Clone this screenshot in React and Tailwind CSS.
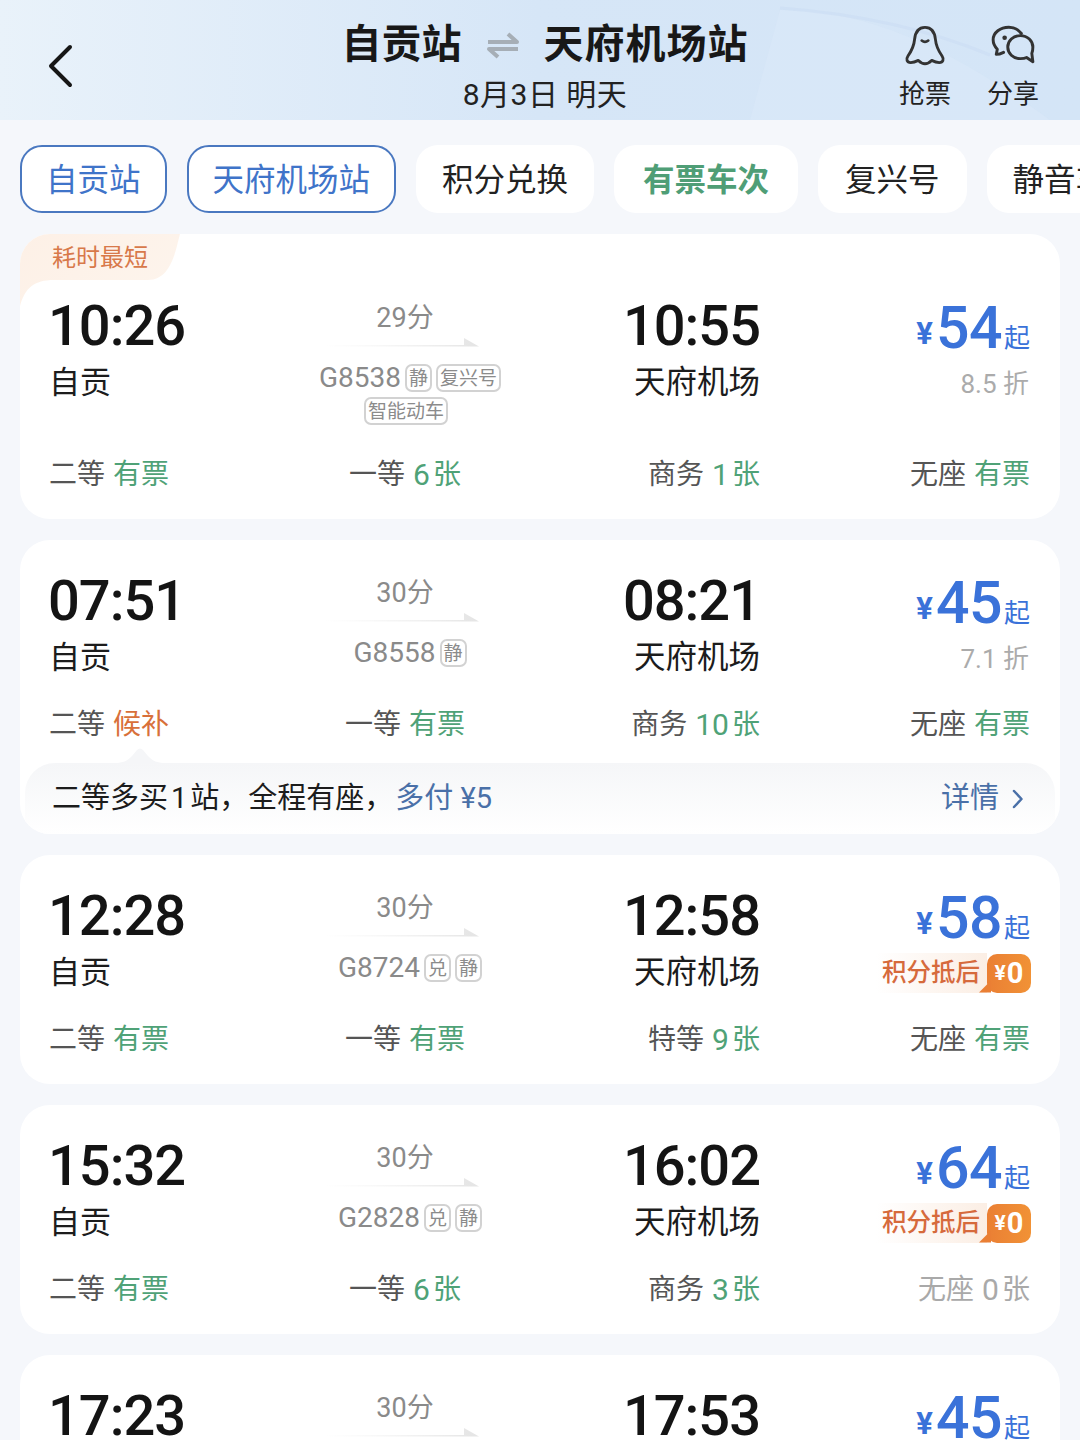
import React from 'react';

const filters = [
    { label: '自贡站', className: 'border-2 border-[#4a78c0] px-[24px] text-[#3f74c9]' },
    { label: '天府机场站', className: 'border-2 border-[#4a78c0] px-[24px] text-[#3f74c9]' },
    { label: '积分兑换', className: 'px-[26px] text-[#222]' },
    { label: '有票车次', className: 'px-[29px] font-bold text-[#4f9e76]' },
    { label: '复兴号', className: 'px-[27px] text-[#222]' },
    { label: '静音车', className: 'px-[26px] text-[#222]' },
];

const trains = [
    {
        depart: '10:26', arrive: '10:55', duration: '29分', code: 'G8538', tags: ['静', '复兴号'], extraTag: '智能动车',
        price: '54', discount: '8.5 折', badge: '耗时最短',
        seats: [['二等', '有票', 'green'], ['一等', '6张', 'green'], ['商务', '1张', 'green'], ['无座', '有票', 'green']],
    },
    {
        depart: '07:51', arrive: '08:21', duration: '30分', code: 'G8558', tags: ['静'],
        price: '45', discount: '7.1 折', tip: true,
        seats: [['二等', '候补', 'orange'], ['一等', '有票', 'green'], ['商务', '10张', 'green'], ['无座', '有票', 'green']],
    },
    {
        depart: '12:28', arrive: '12:58', duration: '30分', code: 'G8724', tags: ['兑', '静'],
        price: '58', points: true,
        seats: [['二等', '有票', 'green'], ['一等', '有票', 'green'], ['特等', '9张', 'green'], ['无座', '有票', 'green']],
    },
    {
        depart: '15:32', arrive: '16:02', duration: '30分', code: 'G2828', tags: ['兑', '静'],
        price: '64', points: true,
        seats: [['二等', '有票', 'green'], ['一等', '6张', 'green'], ['商务', '3张', 'green'], ['无座', '0张', 'gray']],
    },
    {
        depart: '17:23', arrive: '17:53', duration: '30分', code: 'G8730', tags: ['静'],
        price: '45', discount: '7.1 折',
        seats: [['二等', '有票', 'green'], ['一等', '有票', 'green'], ['商务', '有票', 'green'], ['无座', '有票', 'green']],
    },
];

const seatAlign = ['justify-start -ml-px', 'justify-center', 'justify-end', 'justify-end'];

const Arrow = () => (
    <svg width="156" height="12" viewBox="0 0 156 12" className="block mx-auto -translate-x-[3px]">
        <defs>
            <linearGradient id="arrowFade" x1="0" x2="1" y1="0" y2="0">
                <stop offset="0" stopColor="#ececec" stopOpacity="0" />
                <stop offset="1" stopColor="#e4e4e4" />
            </linearGradient>
        </defs>
        <path d="M0 8 H130 V9.5 H0 Z M130 8 H140 V1 L155 9.5 H130 Z" fill="url(#arrowFade)" />
    </svg>
);

const Tag = ({ text }) => (
    <span className="flex h-[28px] items-center rounded-[7px] border-2 border-[#d2d2d2] px-[2px] text-[19px] leading-none text-[#8b8b8b]">
        {text}
    </span>
);

const Seat = ({ seat, align }) => {
    const [name, value, tone] = seat;
    const nameColor = tone === 'gray' ? 'text-[#a9a9a9]' : 'text-[#555]';
    const valueColor = tone === 'orange' ? 'text-[#d8703a]' : tone === 'gray' ? 'text-[#a9a9a9]' : 'text-[#4fa277]';
    const count = value.endsWith('张') ? value.slice(0, -1) : null;
    return (
        <div className={`flex h-[36px] items-center gap-[8px] pt-[4px] text-[28px] leading-[32px] ${align}`}>
            <span className={nameColor}>{name}</span>
            {count ? (
                <span className={`flex items-center gap-[3px] ${valueColor}`}>
                    <span className="text-[30px]">{count}</span>
                    <span>张</span>
                </span>
            ) : (
                <span className={valueColor}>{value}</span>
            )}
        </div>
    );
};

const PointsTag = () => (
    <div className="-mb-px flex h-[40px] items-center justify-end">
        <span className="flex h-[40px] items-center bg-gradient-to-r from-white to-[#fbeee4] pl-[6px] pr-[7px] text-[24.5px] font-medium text-[#d66a3c]">
            积分抵后
        </span>
        <span className="relative -mr-px flex h-[39px] w-[44px] items-center justify-center gap-[1px] rounded-[10px] bg-gradient-to-r from-[#ea7f34] to-[#f19236] font-bold text-white">
            <span className="absolute -left-[8px] bottom-0 h-[12px] w-[12px] bg-[#ea7f34] [clip-path:polygon(0_100%,100%_0,100%_100%)]" />
            <span className="text-[21px] leading-none">¥</span>
            <span className="text-[29px] leading-none">0</span>
        </span>
    </div>
);

const TrainCard = ({ train }) => (
    <div className={`relative overflow-hidden rounded-[30px] bg-white ${train.tip ? '' : 'pb-[28px]'} ${train.badge ? 'pt-[59px]' : 'pt-[28px]'}`}>
        {train.badge && (
            <>
                <svg width="160" height="72" viewBox="0 0 160 72" className="absolute left-0 top-0">
                    <defs>
                        <linearGradient id="badgeFade" x1="0" x2="1" y1="0" y2="0.6">
                            <stop offset="0" stopColor="#fdf0e6" />
                            <stop offset="1" stopColor="#fdf4ec" />
                        </linearGradient>
                    </defs>
                    <path d="M0 0 H160 C156 14 152 46 128 46 H34 C14 46 5 54 0 72 Z" fill="url(#badgeFade)" />
                </svg>
                <span className="absolute left-[32px] top-[7px] text-[24px] leading-[34px] text-[#d8794a]">{train.badge}</span>
            </>
        )}
        <div className="grid grid-cols-[210px_290px_210px_270px] gap-y-[28px] px-[30px]">
            <div className="pt-[1px]">
                <div className="-ml-[2px] text-[56px] font-medium leading-[64px] tracking-[-1px] text-[#141414]">{train.depart}</div>
                <div className="-ml-px mt-[6px] text-[31px] leading-[38px] text-[#1c1c1c]">自贡</div>
            </div>
            <div className="pt-[10px] text-center">
                <div className="text-[27px] leading-[30px] text-[#8a8a8a]">{train.duration}</div>
                <div className="mt-[4px]"><Arrow /></div>
                <div className="mt-[14px] flex h-[30px] items-center justify-center gap-[4px] pl-[10px]">
                    <span className="text-[28px] leading-[30px] text-[#8a8a8a]">{train.code}</span>
                    {train.tags.map((tag) => <Tag key={tag} text={tag} />)}
                </div>
                {train.extraTag && (
                    <div className="mb-[1px] mt-[3px] flex h-[30px] items-center justify-center pl-[2px]">
                        <Tag text={train.extraTag} />
                    </div>
                )}
            </div>
            <div className="pt-[1px] text-right">
                <div className="text-[56px] font-medium leading-[64px] tracking-[-1px] text-[#141414]">{train.arrive}</div>
                <div className="mt-[6px] text-[31.5px] leading-[38px] text-[#1c1c1c]">天府机场</div>
            </div>
            <div>
                <div className="flex h-[70px] items-end justify-end pb-[2px] text-[#3a72d9]">
                    <span className="mb-[7px] mr-[3px] text-[31px] font-bold leading-[40px]">¥</span>
                    <span className="text-[59px] font-medium leading-[66px] tracking-[-0.5px]">{train.price}</span>
                    <span className="mb-[6px] ml-[2px] text-[26px] leading-[34px]">起</span>
                </div>
                {train.discount && (
                    <div className="mt-[3px] pr-px text-right text-[26px] leading-[36px] text-[#ababab]">{train.discount}</div>
                )}
                {train.points && <PointsTag />}
            </div>
            {train.seats.map((seat, i) => <Seat key={seat[0]} seat={seat} align={seatAlign[i]} />)}
        </div>
        {train.tip && (
            <div className="relative mx-[5px] mt-[22px] flex h-[71px] items-center justify-between rounded-t-[30px] bg-gradient-to-b from-[#f5f6f8] to-white pl-[27px] pr-[32px] text-[29px]">
                <svg width="50" height="16" viewBox="0 0 50 16" className="absolute left-[90px] top-[-16px]">
                    <path d="M0 16 C8 16 12 14 17 9 L22 3 C24 1 26 1 28 3 L33 9 C38 14 42 16 50 16 Z" fill="#f5f6f8" />
                </svg>
                <div className="text-[#1c1c1c]">
                    二等多买<span className="mx-[3px]">1</span>站，全程有座，<span className="ml-[2px] text-[#4a70a8]">多付 ¥5</span>
                </div>
                <div className="flex items-center gap-[13px] text-[#4a70a8]">
                    详情
                    <svg width="11" height="20" viewBox="0 0 11 20" fill="none">
                        <path d="M2 2 L9.5 10 L2 18" stroke="#4a70a8" strokeWidth="2.5" strokeLinecap="round" strokeLinejoin="round" />
                    </svg>
                </div>
            </div>
        )}
    </div>
);

const App = () => {
    return (
        <div className="h-[1440px] w-[1080px] overflow-hidden bg-[#f5f7fb] [font-family:Roboto,'Noto_Sans_CJK_SC',sans-serif]">
            <header className="relative flex h-[120px] overflow-hidden bg-gradient-to-r from-[#e9f2fa] via-[#d6e6f7] to-[#d4e5f7]">
                <svg width="400" height="120" viewBox="0 0 400 120" fill="none" className="absolute right-0 top-0">
                    <path d="M70 120 L100 10 C180 10 260 40 370 120 Z" fill="#dbe9f9" opacity="0.5" />
                    <path d="M100 8 C180 14 250 30 310 55" stroke="#c9dcf4" strokeWidth="3" opacity="0.5" />
                </svg>
                <div className="relative flex w-[195px] items-center pl-[48px] pt-[11px]">
                    <svg width="26" height="44" viewBox="0 0 26 44" fill="none">
                        <path d="M22 3 L3 22 L22 41" stroke="#161616" strokeWidth="4" strokeLinecap="round" strokeLinejoin="round" />
                    </svg>
                </div>
                <div className="relative flex flex-1 flex-col items-center pt-[21px]">
                    <div className="flex h-[48px] items-center text-[40px] font-bold leading-[48px] text-[#181818]">
                        <span>自贡站</span>
                        <svg width="32" height="28" viewBox="0 0 32 28" fill="none" className="mx-[25px]">
                            <path d="M1 11 H30 L21 3" stroke="#a6aeb6" strokeWidth="4" strokeLinejoin="round" />
                            <path d="M31 18 H2 L11 26" stroke="#a6aeb6" strokeWidth="4" strokeLinejoin="round" />
                        </svg>
                        <span className="tracking-[1px]">天府机场站</span>
                    </div>
                    <div className="mt-[6px] text-[30px] leading-[40px] tracking-[0.5px] text-[#222]">8月3日 明天</div>
                </div>
                <div className="relative flex gap-[28px] pr-[37px] pt-[24px]">
                    <div className="flex w-[60px] flex-col items-center">
                        <svg width="44" height="42" viewBox="0 0 40 38" fill="none">
                            <path d="M20 3 C12.5 3 11 9 10.5 14 C10 20 8 24 4.5 29 C2.5 32 3.5 35 7 35 C10 35 12 34 14 33 C16 35 18 36 20 36 C22 36 24 35 26 33 C28 34 30 35 33 35 C36.5 35 37.5 32 35.5 29 C32 24 30 20 29.5 14 C29 9 27.5 3 20 3 Z" stroke="#333" strokeWidth="2.6" strokeLinejoin="round" />
                            <path d="M17 15 Q20 17.5 23 15" stroke="#333" strokeWidth="2.4" strokeLinecap="round" />
                        </svg>
                        <span className="mt-[10px] text-[26px] leading-[36px] text-[#222]">抢票</span>
                    </div>
                    <div className="flex w-[60px] flex-col items-center">
                        <svg width="46" height="42" viewBox="0 0 44 40" fill="none">
                            <path d="M30 9 C27 5 23 3 18 3 C10 3 3 8 3 15 C3 19 5 22 7 24 L6 29 C8 29 11 28 13 27" stroke="#333" strokeWidth="2.8" strokeLinecap="round" strokeLinejoin="round" />
                            <path d="M29 11 C22 11 17 16 17 22 C17 28 22 33 29 33 C31 33 33 33 35 32 L41 36 L40 28 C41 26 41 24 41 22 C41 16 36 11 29 11 Z" stroke="#333" strokeWidth="2.8" strokeLinejoin="round" />
                            <circle cx="14" cy="13" r="2.2" fill="#333" />
                        </svg>
                        <span className="mt-[10px] text-[26px] leading-[36px] text-[#222]">分享</span>
                    </div>
                </div>
            </header>

            <div className="flex gap-[20px] overflow-hidden pl-5 pt-[25px]">
                {filters.map((f) => (
                    <div key={f.label} className={`flex h-[68px] shrink-0 items-center rounded-[22px] bg-white pt-[3px] text-[31.5px] ${f.className}`}>
                        {f.label}
                    </div>
                ))}
            </div>

            <main className="flex flex-col gap-[21px] px-5 pt-[21px]">
                {trains.map((train) => <TrainCard key={train.code} train={train} />)}
            </main>
        </div>
    );
};

export default App;
